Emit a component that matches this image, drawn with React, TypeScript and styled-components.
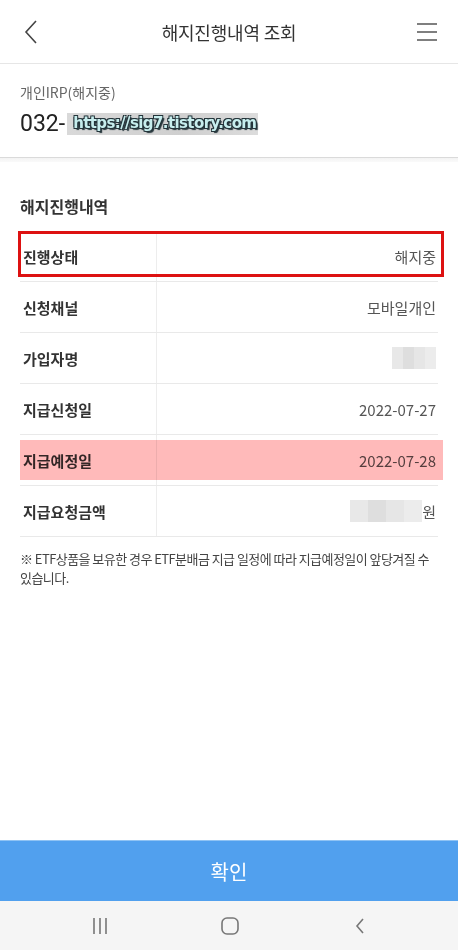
import React from 'react';
import styled, { createGlobalStyle } from 'styled-components';

const GlobalStyle = createGlobalStyle`
  html, body {
    margin: 0;
    padding: 0;
    background: #fff;
  }
  body {
    font-family: 'Noto Sans CJK KR', 'Noto Sans', sans-serif;
    color: #333;
  }
  * { box-sizing: border-box; }
`;

const Page = styled.div`
  display: flex;
  flex-direction: column;
  width: 458px;
  height: 950px;
  overflow: hidden;
`;

const Header = styled.header`
  height: 64px;
  display: flex;
  align-items: center;
  justify-content: space-between;
  padding: 0 20px 0 20px;
  border-bottom: 1px solid #e6e6e6;
`;

const HeaderTitle = styled.h1`
  margin: 0;
  font-size: 18px;
  font-weight: 400;
  color: #333;
  letter-spacing: -0.2px;
`;

const IconButton = styled.div`
  width: 22px;
  height: 26px;
  display: flex;
  align-items: center;
  justify-content: center;
`;

const Account = styled.section`
  height: 94px;
  padding: 18px 20px 0;
  border-bottom: 1px solid #dadada;
`;

const AccountLabel = styled.div`
  font-size: 14px;
  color: #666;
  line-height: 20px;
`;

const AccountNumber = styled.div`
  display: flex;
  align-items: center;
  margin-top: 9px;
  font-family: 'Roboto', 'Noto Sans CJK KR', sans-serif;
  font-size: 23px;
  color: #222;
  line-height: 26px;
`;

const Watermark = styled.span`
  display: inline-block;
  margin-left: 2px;
  padding: 0 2px 0 6px;
  height: 22px;
  line-height: 21px;
  background: linear-gradient(90deg, #d9d9d9, #cfcfcf 60%, #dcdcdc);
  font-family: 'DejaVu Sans', sans-serif;
  font-weight: 700;
  font-size: 15px;
  letter-spacing: -0.6px;
  color: #c7eeee;
  text-shadow:
    -1px -1px 0 #24343a, 1px -1px 0 #24343a, -1px 1px 0 #24343a,
    1px 1px 0 #24343a, 2px 2px 1px #24343a;
`;

const Band = styled.div`
  height: 4px;
  background: linear-gradient(#f3f3f3, #fafafa);
`;

const Content = styled.main`
  padding: 32px 20px 0;
`;

const SectionTitle = styled.h2`
  margin: 0 0 13px;
  font-size: 16px;
  font-weight: 700;
  color: #333;
  line-height: 24px;
`;

const Table = styled.div`
  display: flex;
  flex-direction: column;
`;

const Row = styled.div`
  position: relative;
  display: grid;
  grid-template-columns: 137px 1fr;
  height: 51px;
  border-bottom: 1px solid #e9e9e9;
`;

const Label = styled.div`
  display: flex;
  align-items: center;
  padding-left: 3px;
  font-size: 15px;
  font-weight: 700;
  color: #333;
  border-right: 1px solid #ededed;
`;

const Value = styled.div`
  display: flex;
  align-items: center;
  justify-content: flex-end;
  padding-right: 2px;
  font-size: 15px;
  color: #555;
`;

const Mosaic = styled.span<{ $w: number }>`
  display: inline-block;
  width: ${p => p.$w}px;
  height: 22px;
  background:
    linear-gradient(90deg, #e8e8e8 0 25%, #dedede 25% 50%, #e6e6e6 50% 75%, #ececec 75%);
`;

const RedBox = styled.div`
  position: absolute;
  left: -2px;
  right: -6px;
  top: 0;
  bottom: 4px;
  border: 3px solid #dd1111;
  pointer-events: none;
`;

const PinkMark = styled.div`
  position: absolute;
  left: 0;
  right: -5px;
  top: 5px;
  bottom: 5px;
  background: #ffbaba;
  mix-blend-mode: multiply;
  pointer-events: none;
`;

const Note = styled.p`
  margin: 12px 0 0;
  font-size: 13px;
  line-height: 19px;
  color: #444;
  letter-spacing: -0.55px;
`;

const Spacer = styled.div`
  flex: 1;
`;

const ConfirmButton = styled.button`
  height: 61px;
  border: none;
  border-top: 1px solid #8fc3f4;
  background: #51a0ee;
  color: #fff;
  font-family: inherit;
  font-size: 20px;
  font-weight: 400;
  padding: 0;
`;

const NavBar = styled.nav`
  height: 49px;
  background: #f5f5f5;
  display: grid;
  grid-template-columns: repeat(3, 130px);
  justify-content: center;
  justify-items: center;
  align-items: center;
  padding-left: 2px;
`;

type Item = {
  label: string;
  value: React.ReactNode;
  mark?: 'box' | 'pink';
};

const items: Item[] = [
  { label: '진행상태', value: '해지중', mark: 'box' },
  { label: '신청채널', value: '모바일개인' },
  { label: '가입자명', value: <Mosaic $w={44} /> },
  { label: '지급신청일', value: '2022-07-27' },
  { label: '지급예정일', value: '2022-07-28', mark: 'pink' },
  {
    label: '지급요청금액',
    value: (
      <>
        <Mosaic $w={72} />원
      </>
    )
  }
];

export default function App() {
  return (
    <Page>
      <GlobalStyle />
      <Header>
        <IconButton>
          <svg width="14" height="26" viewBox="0 0 14 26">
            <path d="M12 2 L2 13 L12 24" fill="none" stroke="#444" strokeWidth="1.6" />
          </svg>
        </IconButton>
        <HeaderTitle>해지진행내역 조회</HeaderTitle>
        <IconButton>
          <svg width="22" height="20" viewBox="0 0 22 20">
            <path d="M1 2 H21 M1 10 H21 M1 18 H21" stroke="#555" strokeWidth="1.6" />
          </svg>
        </IconButton>
      </Header>

      <Account>
        <AccountLabel>개인IRP(해지중)</AccountLabel>
        <AccountNumber>
          032-<Watermark>https://sig7.tistory.com</Watermark>
        </AccountNumber>
      </Account>
      <Band />

      <Content>
        <SectionTitle>해지진행내역</SectionTitle>
        <Table>
          {items.map(item => (
            <Row key={item.label}>
              <Label>{item.label}</Label>
              <Value>{item.value}</Value>
              {item.mark === 'box' && <RedBox />}
              {item.mark === 'pink' && <PinkMark />}
            </Row>
          ))}
        </Table>
        <Note>
          ※ ETF상품을 보유한 경우 ETF분배금 지급 일정에 따라 지급예정일이 앞당겨질 수
          있습니다.
        </Note>
      </Content>

      <Spacer />
      <ConfirmButton>확인</ConfirmButton>
      <NavBar>
        <svg width="18" height="18" viewBox="0 0 18 18">
          <path d="M3 1 V17 M9 1 V17 M15 1 V17" stroke="#777" strokeWidth="1.6" />
        </svg>
        <svg width="20" height="20" viewBox="0 0 20 20">
          <rect x="2" y="2" width="16" height="16" rx="5" fill="none" stroke="#777" strokeWidth="1.6" />
        </svg>
        <svg width="12" height="18" viewBox="0 0 12 18">
          <path d="M9 2 L3 9 L9 16" fill="none" stroke="#777" strokeWidth="1.6" />
        </svg>
      </NavBar>
    </Page>
  );
}
